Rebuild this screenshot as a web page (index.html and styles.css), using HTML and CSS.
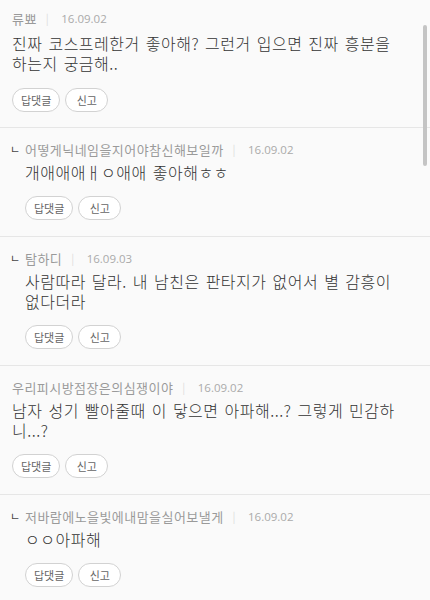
FILE: index.html
```html
<!DOCTYPE html>
<html lang="ko">
<head>
    <meta charset="UTF-8">
    <meta name="viewport" content="width=device-width, initial-scale=1.0">
    <title>댓글</title>
    <link rel="stylesheet" href="styles.css">
</head>
<body>

    <ul class="comments">
        <li class="comment first">
            <div class="meta">
                <span class="name">류뾰</span>
                <span class="bar">|</span>
                <span class="date">16.09.02</span>
            </div>
            <p class="text">진짜 코스프레한거 좋아해? 그런거 입으면 진짜 흥분을 하는지 궁금해..</p>
            <div class="actions">
                <button>답댓글</button>
                <button>신고</button>
            </div>
        </li>

        <li class="comment reply">
            <div class="meta">
                <span class="mark">ㄴ</span>
                <span class="name">어떻게닉네임을지어야참신해보일까</span>
                <span class="bar">|</span>
                <span class="date">16.09.02</span>
            </div>
            <p class="text">개애애애ㅐㅇ애애 좋아해ㅎㅎ</p>
            <div class="actions">
                <button>답댓글</button>
                <button>신고</button>
            </div>
        </li>

        <li class="comment reply">
            <div class="meta">
                <span class="mark">ㄴ</span>
                <span class="name">탐하디</span>
                <span class="bar">|</span>
                <span class="date">16.09.03</span>
            </div>
            <p class="text">사람따라 달라. 내 남친은 판타지가 없어서 별 감흥이 없다더라</p>
            <div class="actions">
                <button>답댓글</button>
                <button>신고</button>
            </div>
        </li>

        <li class="comment">
            <div class="meta">
                <span class="name">우리피시방점장은의심쟁이야</span>
                <span class="bar">|</span>
                <span class="date">16.09.02</span>
            </div>
            <p class="text">남자 성기 빨아줄때 이 닿으면 아파해...? 그렇게 민감하니...?</p>
            <div class="actions">
                <button>답댓글</button>
                <button>신고</button>
            </div>
        </li>

        <li class="comment reply">
            <div class="meta">
                <span class="mark">ㄴ</span>
                <span class="name">저바람에노을빛에내맘을실어보낼게</span>
                <span class="bar">|</span>
                <span class="date">16.09.02</span>
            </div>
            <p class="text">ㅇㅇ아파해</p>
            <div class="actions">
                <button>답댓글</button>
                <button>신고</button>
            </div>
        </li>
    </ul>

    <!-- 스크롤바 -->
    <div class="scroll-thumb"></div>

</body>
</html>
```

FILE: styles.css
```css
body {
    margin: 0;
    background: #fafafa;
    font-family: "Noto Sans CJK KR", "Noto Sans", sans-serif;
    color: #333;
    overflow: hidden;
}

.comments {
    list-style: none;
    margin: 0;
    padding: 0;
}

.comment {
    padding: 11px 20px 16px 12px;
    border-bottom: 1px solid #e6e6e6;
}

.comment.first {
    padding-top: 8px;
    padding-bottom: 15px;
}

.comment.reply {
    padding-left: 25px;
}

.meta {
    display: flex;
    align-items: center;
    height: 20px;
    font-size: 13px;
    letter-spacing: 0.45px;
    color: #9a9a9a;
}

.reply .meta {
    margin-left: -15px;
}

.mark {
    color: #444;
    font-size: 11px;
    width: 15px;
}

.bar {
    color: #ddd;
    font-size: 11px;
    margin: 0 12px 0 9px;
}

.date {
    color: #aaa;
    font-family: "Open Sans", "Noto Sans", sans-serif;
    font-size: 11.5px;
    letter-spacing: 0;
}

.text {
    margin: 3px 0 0 0;
    font-size: 16px;
    font-weight: 300;
    line-height: 20px;
    letter-spacing: 0.5px;
    word-spacing: 1px;
    color: #333;
}

.first .text {
    margin-top: 5px;
}

.actions {
    display: flex;
    gap: 5px;
    margin-top: 14px;
}

.first .actions {
    margin-top: 15px;
}

button {
    min-width: 43px;
    height: 24px;
    padding: 0 8px;
    border: 1px solid #d2d2d2;
    border-radius: 12px;
    background: #fff;
    color: #666;
    font-family: "Noto Sans CJK KR", sans-serif;
    font-size: 11px;
    line-height: 22px;
}

/* 오른쪽 스크롤바 */
.scroll-thumb {
    position: fixed;
    top: 25px;
    right: 3px;
    width: 4px;
    height: 141px;
    border-radius: 2px;
    background: #c4c4c4;
}
```
